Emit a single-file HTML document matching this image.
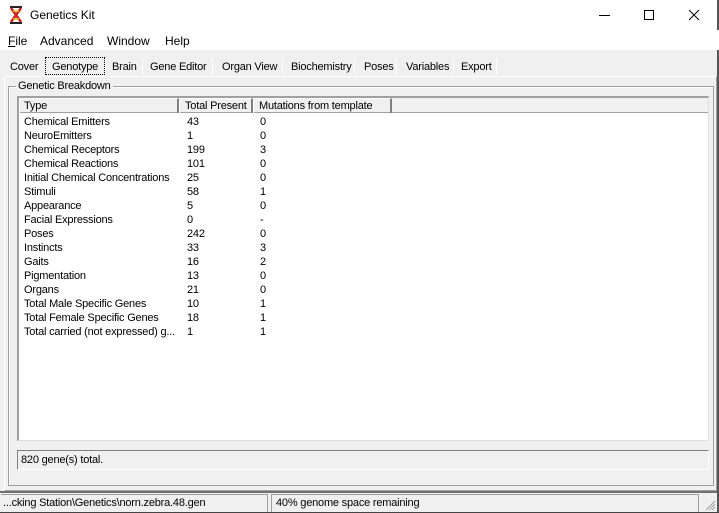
<!DOCTYPE html>
<html><head><style>
*{margin:0;padding:0;box-sizing:border-box}
body{width:719px;height:513px;overflow:hidden;background:#f0f0f0;font-family:"Liberation Sans",sans-serif;font-size:11px;color:#000;position:relative;letter-spacing:-0.2px}
.a{position:absolute;white-space:nowrap}
#title{left:0;top:0;width:719px;height:30px;background:#fff;letter-spacing:0}
#menu{left:0;top:30px;width:719px;height:20px;background:#fff;font-size:12px;letter-spacing:0}
.row{position:absolute;left:0;width:400px;height:14px;line-height:14px}
.row span{position:absolute}
.sep{position:absolute;top:58px;width:1px;height:17px;background:#a0a0a0;border-right:1px solid #fff}
</style></head><body>
<div class="a" id="title">
 <svg class="a" style="left:8px;top:6px" width="16" height="18" viewBox="0 0 16 18"><path d="M2 1h12M2 17h12" stroke="#222" stroke-width="2"/><path d="M3 2L13 16M13 2L3 16" stroke="#c22" stroke-width="2.5"/><path d="M5 5h6M5 13h6" stroke="#e8c020" stroke-width="1.5"/></svg>
 <div class="a" style="left:30px;top:8px;font-size:12px">Genetics Kit</div>
 <div class="a" style="left:599px;top:15px;width:11px;height:1px;background:#000"></div>
 <div class="a" style="left:644px;top:10px;width:10px;height:10px;border:1px solid #000"></div>
 <svg class="a" style="left:688px;top:9px" width="12" height="12"><path d="M1 1L11 11M11 1L1 11" stroke="#000" stroke-width="1"/></svg>
</div>
<div class="a" style="left:717px;top:0;width:2px;height:513px;background:#555"></div>
<div class="a" id="menu">
 <div class="a" style="left:8px;top:4px"><u>F</u>ile</div>
 <div class="a" style="left:40px;top:4px">Advanced</div>
 <div class="a" style="left:107px;top:4px">Window</div>
 <div class="a" style="left:165px;top:4px">Help</div>
</div>
<div class="a" style="left:10px;top:61px">Cover</div>
<div class="a" style="left:45px;top:57px;width:60px;height:18px;border:1px dotted #000"></div>
<div class="a" style="left:52px;top:61px">Genotype</div>
<div class="sep" style="left:105px"></div>
<div class="a" style="left:112px;top:61px">Brain</div>
<div class="sep" style="left:142px"></div>
<div class="a" style="left:150px;top:61px">Gene Editor</div>
<div class="sep" style="left:212px"></div>
<div class="a" style="left:222px;top:61px">Organ View</div>
<div class="sep" style="left:282px"></div>
<div class="a" style="left:291px;top:61px">Biochemistry</div>
<div class="sep" style="left:354px"></div>
<div class="a" style="left:364px;top:61px">Poses</div>
<div class="sep" style="left:396px"></div>
<div class="a" style="left:406px;top:61px">Variables</div>
<div class="sep" style="left:453px"></div>
<div class="a" style="left:461px;top:61px">Export</div>
<div class="sep" style="left:496px"></div>
<div class="a" style="left:4px;top:76px;width:713px;height:415px;border-top:1px solid #fff;border-left:1px solid #fff;border-right:1px solid #a0a0a0;border-bottom:1px solid #a0a0a0"></div>
<div class="a" style="left:8px;top:86px;width:706px;height:400px;border:1px solid #a0a0a0;box-shadow:1px 1px 0 #fff inset"></div>
<div class="a" style="left:16px;top:80px;background:#f0f0f0;padding:0 2px">Genetic Breakdown</div>
<div class="a" style="left:17px;top:96px;width:692px;height:345px;background:#fff;border-top:2px solid #a0a0a0;border-left:2px solid #a0a0a0;border-right:1px solid #e0e0e0;border-bottom:1px solid #e0e0e0"></div>
<div class="a" style="left:19px;top:98px;width:689px;height:15px;background:#f0f0f0;border-bottom:1px solid #a0a0a0"></div>
<div class="a" style="left:19px;top:98px;width:160px;height:15px;border-right:2px solid #808080;border-left:1px solid #fff;border-top:1px solid #fff"></div>
<div class="a" style="left:179px;top:98px;width:74px;height:15px;border-right:2px solid #808080;border-left:1px solid #fff;border-top:1px solid #fff"></div>
<div class="a" style="left:253px;top:98px;width:139px;height:15px;border-right:2px solid #808080;border-left:1px solid #fff;border-top:1px solid #fff"></div>
<div class="a" style="left:24px;top:100px">Type</div>
<div class="a" style="left:185px;top:100px">Total Present</div>
<div class="a" style="left:259px;top:100px">Mutations from template</div>
<div class="a" style="left:0;top:115px;width:400px">
<div class="row" style="top:0"><span style="left:24px">Chemical Emitters</span><span style="left:187px">43</span><span style="left:260px">0</span></div>
<div class="row" style="top:14px"><span style="left:24px">NeuroEmitters</span><span style="left:187px">1</span><span style="left:260px">0</span></div>
<div class="row" style="top:28px"><span style="left:24px">Chemical Receptors</span><span style="left:187px">199</span><span style="left:260px">3</span></div>
<div class="row" style="top:42px"><span style="left:24px">Chemical Reactions</span><span style="left:187px">101</span><span style="left:260px">0</span></div>
<div class="row" style="top:56px"><span style="left:24px">Initial Chemical Concentrations</span><span style="left:187px">25</span><span style="left:260px">0</span></div>
<div class="row" style="top:70px"><span style="left:24px">Stimuli</span><span style="left:187px">58</span><span style="left:260px">1</span></div>
<div class="row" style="top:84px"><span style="left:24px">Appearance</span><span style="left:187px">5</span><span style="left:260px">0</span></div>
<div class="row" style="top:98px"><span style="left:24px">Facial Expressions</span><span style="left:187px">0</span><span style="left:260px">-</span></div>
<div class="row" style="top:112px"><span style="left:24px">Poses</span><span style="left:187px">242</span><span style="left:260px">0</span></div>
<div class="row" style="top:126px"><span style="left:24px">Instincts</span><span style="left:187px">33</span><span style="left:260px">3</span></div>
<div class="row" style="top:140px"><span style="left:24px">Gaits</span><span style="left:187px">16</span><span style="left:260px">2</span></div>
<div class="row" style="top:154px"><span style="left:24px">Pigmentation</span><span style="left:187px">13</span><span style="left:260px">0</span></div>
<div class="row" style="top:168px"><span style="left:24px">Organs</span><span style="left:187px">21</span><span style="left:260px">0</span></div>
<div class="row" style="top:182px"><span style="left:24px">Total Male Specific Genes</span><span style="left:187px">10</span><span style="left:260px">1</span></div>
<div class="row" style="top:196px"><span style="left:24px">Total Female Specific Genes</span><span style="left:187px">18</span><span style="left:260px">1</span></div>
<div class="row" style="top:210px"><span style="left:24px">Total carried (not expressed) g...</span><span style="left:187px">1</span><span style="left:260px">1</span></div>
</div>
<div class="a" style="left:17px;top:450px;width:692px;height:20px;border-top:1px solid #808080;border-left:1px solid #808080;border-right:1px solid #fff;border-bottom:1px solid #fff"></div>
<div class="a" style="left:21px;top:454px">820 gene(s) total.</div>
<div class="a" style="left:0;top:491px;width:717px;height:2px;background:#707070"></div>
<div class="a" style="left:1px;top:494px;width:267px;height:18px;border-top:1px solid #a0a0a0;border-right:1px solid #a0a0a0"></div>
<div class="a" style="left:3px;top:497px">...cking Station\Genetics\norn.zebra.48.gen</div>
<div class="a" style="left:271px;top:494px;width:428px;height:18px;border-top:1px solid #a0a0a0;border-right:1px solid #a0a0a0;border-left:1px solid #a0a0a0"></div>
<div class="a" style="left:276px;top:497px">40% genome space remaining</div>
<svg class="a" style="left:704px;top:499px" width="12" height="12"><path d="M11 2L2 11M11 5L5 11M11 8L8 11" stroke="#a0a0a0"/></svg>
<div class="a" style="left:0;top:512px;width:719px;height:1px;background:#444"></div>
</body></html>
